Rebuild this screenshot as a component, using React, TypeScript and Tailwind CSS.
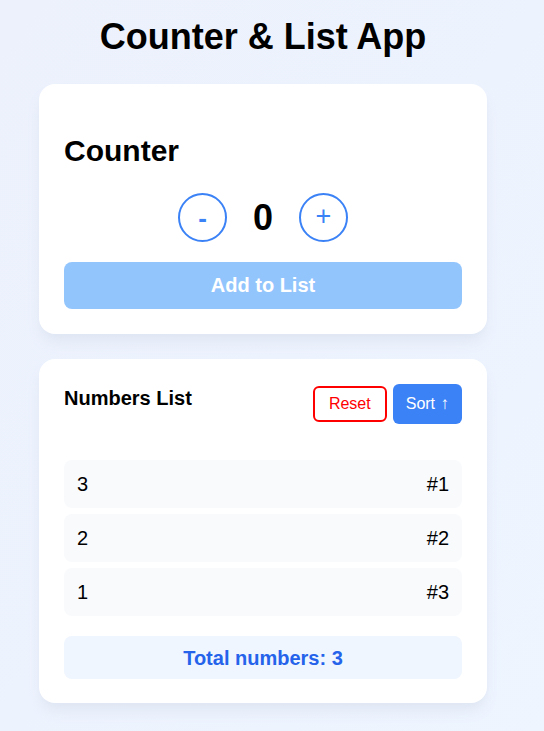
import React from "react";

export default function App() {
  const items = [3, 2, 1];
  return (
    <div
      className="min-h-[731px] w-full bg-gradient-to-br from-[#ecf1fc] to-[#eef5ff] pr-[18px] pt-[17px] pb-[28px]"
      style={{ fontFamily: '"Liberation Sans", Arial, sans-serif' }}
    >
      <div className="mx-auto w-[448px]">
        <h1 className="mb-[27px] text-center text-4xl font-bold text-black">Counter &amp; List App</h1>

        <div className="mb-[25px] rounded-2xl bg-white px-[25px] pt-[49px] pb-[25px] shadow-lg shadow-[#dfe6f3]">
          <h2 className="mb-6 text-3xl font-bold text-black">Counter</h2>
          <div className="mb-5 flex items-center justify-center gap-[25px]">
            <button className="flex h-[49px] w-[49px] items-center justify-center rounded-full border-2 border-[#3b82f6] bg-white text-[26px] font-bold leading-none text-[#3b82f6]">
              -
            </button>
            <span className="w-[22px] text-center text-4xl font-bold text-black">0</span>
            <button className="flex h-[49px] w-[49px] items-center justify-center rounded-full border-2 border-[#3b82f6] bg-white pb-[2px] text-[27px] leading-none text-[#3b82f6]">
              +
            </button>
          </div>
          <button className="h-[47px] w-full rounded-lg bg-[#93c5fd] pb-[2px] text-xl font-bold text-white">Add to List</button>
        </div>

        <div className="rounded-2xl bg-white p-[25px] pb-6 shadow-lg shadow-[#dfe6f3]">
          <div className="mb-9 flex items-start justify-between">
            <h2 className="text-xl font-bold text-black">Numbers List</h2>
            <div className="flex items-center gap-[6px]">
              <button className="h-[36px] rounded-md border-2 border-[#ff0000] bg-white px-[14px] text-base text-[#ff0000]">
                Reset
              </button>
              <button className="h-10 rounded-md bg-[#3b82f6] px-[13px] text-base text-white">
                Sort <span className="ml-[1px] inline-block text-[17px]">↑</span>
              </button>
            </div>
          </div>
          <div className="flex flex-col gap-[6px]">
            {items.map((n, i) => (
              <div key={n} className="flex h-[48px] items-center justify-between rounded-lg bg-[#f8fafc] px-[13px] text-xl text-black">
                <span>{n}</span>
                <span>#{i + 1}</span>
              </div>
            ))}
          </div>
          <div className="mt-5 flex h-[43px] items-center justify-center rounded-lg bg-[#eff6ff] text-xl font-bold text-[#2563eb]">
            Total numbers: 3
          </div>
        </div>
      </div>
    </div>
  );
}
